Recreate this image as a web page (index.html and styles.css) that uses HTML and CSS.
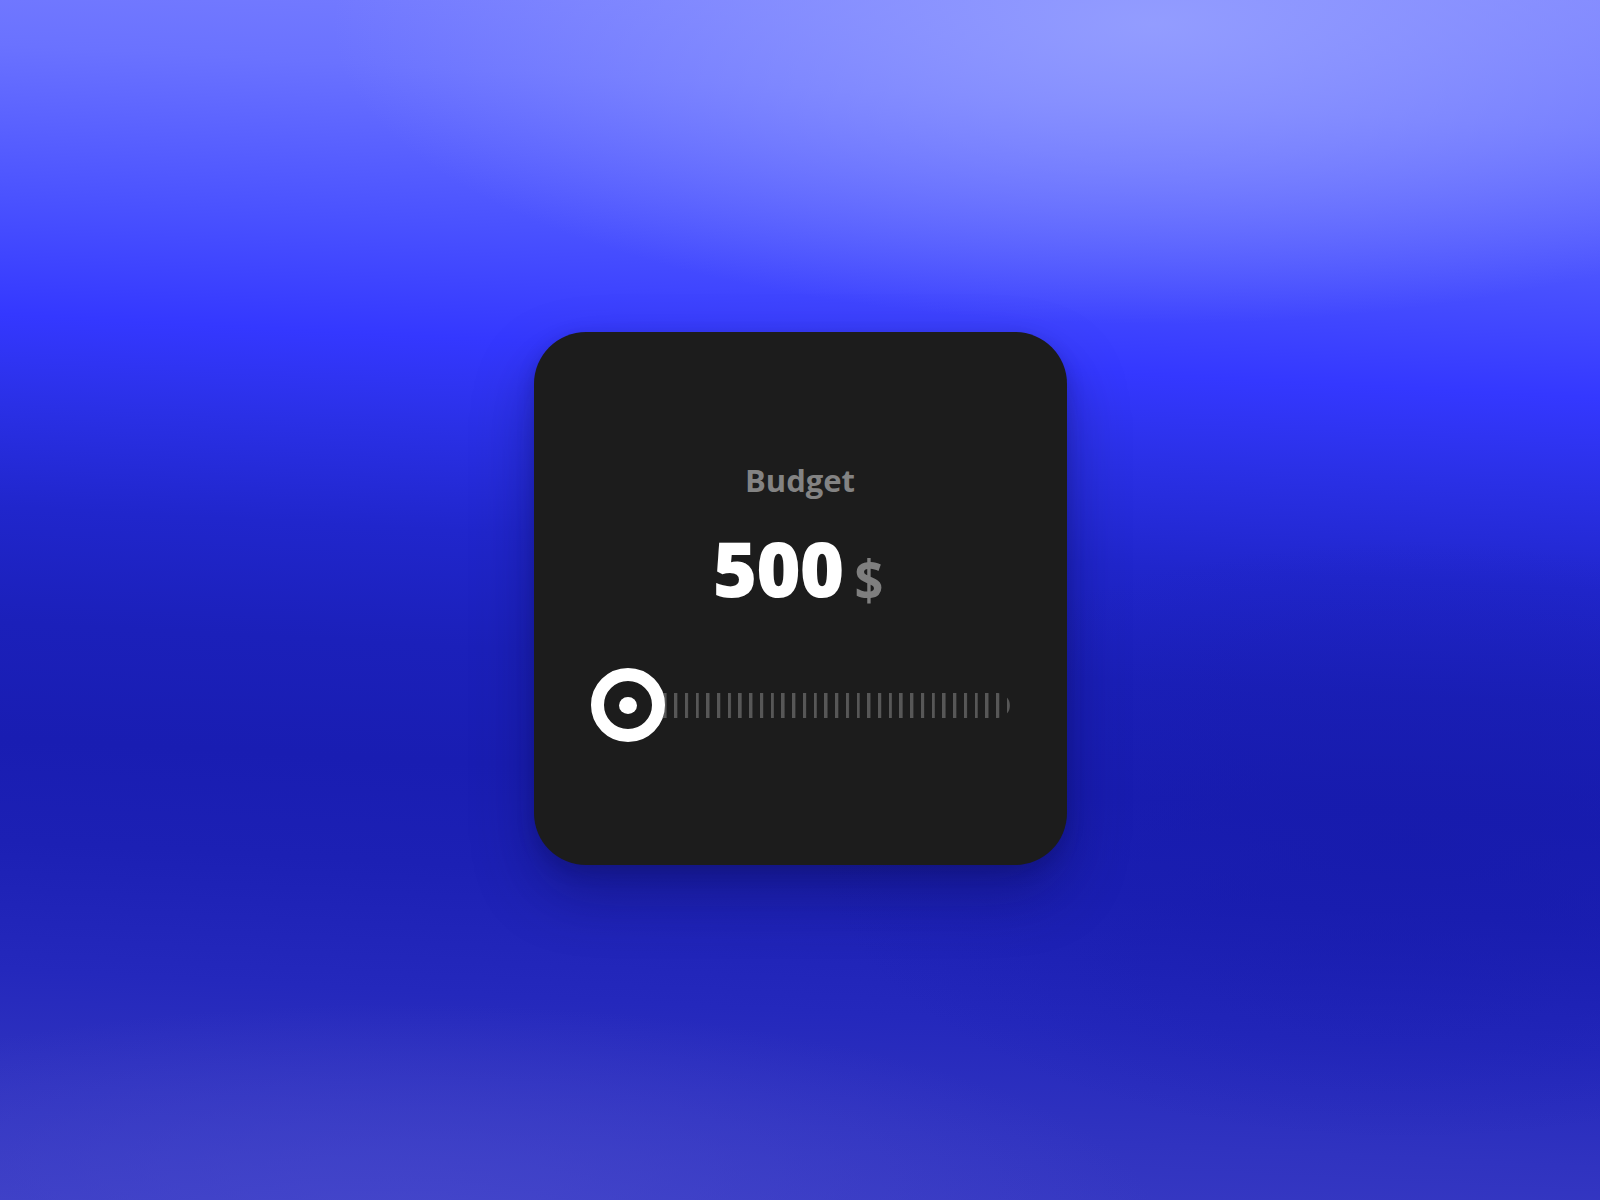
FILE: index.html
```html
<!DOCTYPE html>
<html lang="en">
<head>
<meta charset="utf-8">
<title>Budget</title>
<link rel="stylesheet" href="styles.css">
</head>
<body>
  <main class="stage">
    <section class="card">
      <div class="label">Budget</div>
      <div class="value">
        <span class="amount">500</span>
        <span class="currency">$</span>
      </div>
      <div class="slider">
        <div class="track"></div>
        <div class="knob"><span class="dot"></span></div>
      </div>
    </section>
  </main>
</body>
</html>
```

FILE: styles.css
```css
html, body {
  margin: 0;
  padding: 0;
  height: 100%;
}

body {
  font-family: "Open Sans", "Noto Sans", "DejaVu Sans", sans-serif;
  background:
    radial-gradient(ellipse 820px 300px at 72% 2%, rgba(150, 160, 255, 0.9) 0%, rgba(150, 160, 255, 0.5) 45%, rgba(150, 160, 255, 0) 100%),
    radial-gradient(ellipse 760px 220px at 25% 102%, rgba(70, 72, 204, 0.85) 0%, rgba(70, 72, 204, 0) 100%),
    radial-gradient(ellipse 600px 300px at 88% 70%, rgba(22, 26, 170, 0.7) 0%, rgba(22, 26, 170, 0) 100%),
    linear-gradient(183deg, #7a80ff 0%, #6a72ff 10%, #4a52ff 22%, #3438ff 31%, #2a30e6 38%, #2026cc 46%, #1b20ba 55%, #191db2 64%, #1c20b4 72%, #2428bc 82%, #3033c0 91%, #3a3cc4 100%);
  background-repeat: no-repeat;
}

.stage {
  height: 100%;
  display: flex;
  align-items: center;
  justify-content: center;
}

.card {
  box-sizing: border-box;
  width: 533px;
  height: 533px;
  margin-top: -3px;
  padding: 133px 57px 0;
  background: #1c1c1c;
  border-radius: 52px;
  box-shadow: 0 28px 60px rgba(8, 8, 70, 0.35), 0 6px 18px rgba(8, 8, 60, 0.2);
  display: flex;
  flex-direction: column;
  align-items: center;
}

.label {
  font-size: 31px;
  line-height: 31px;
  font-weight: 700;
  color: #838383;
}

.value {
  margin-top: 34px;
  height: 76px;
  display: flex;
  align-items: baseline;
  justify-content: center;
  gap: 10px;
  margin-left: -2px;
}

.amount {
  font-size: 76px;
  line-height: 76px;
  font-weight: 800;
  color: #ffffff;
  letter-spacing: -1px;
}

.currency {
  font-size: 56px;
  line-height: 76px;
  font-weight: 700;
  color: #7f7f7f;
  transform: scaleX(0.9) translateY(3px);
}

.slider {
  position: relative;
  margin-top: 62px;
  width: 419px;
  height: 74px;
  display: flex;
  align-items: center;
}

.track {
  width: 100%;
  height: 25px;
  border-radius: 12.5px;
  background-image: repeating-linear-gradient(90deg, #575757 0, #575757 2.6px, rgba(87, 87, 87, 0) 3.8px, rgba(87, 87, 87, 0) 10.73px);
  background-position: 8px 0;
}

.knob {
  position: absolute;
  left: 0;
  top: 0;
  box-sizing: border-box;
  width: 74px;
  height: 74px;
  border-radius: 50%;
  border: 13px solid #ffffff;
  background: #1c1c1c;
  display: flex;
  align-items: center;
  justify-content: center;
}

.dot {
  width: 18px;
  height: 17px;
  border-radius: 50%;
  background: #ffffff;
}
```
